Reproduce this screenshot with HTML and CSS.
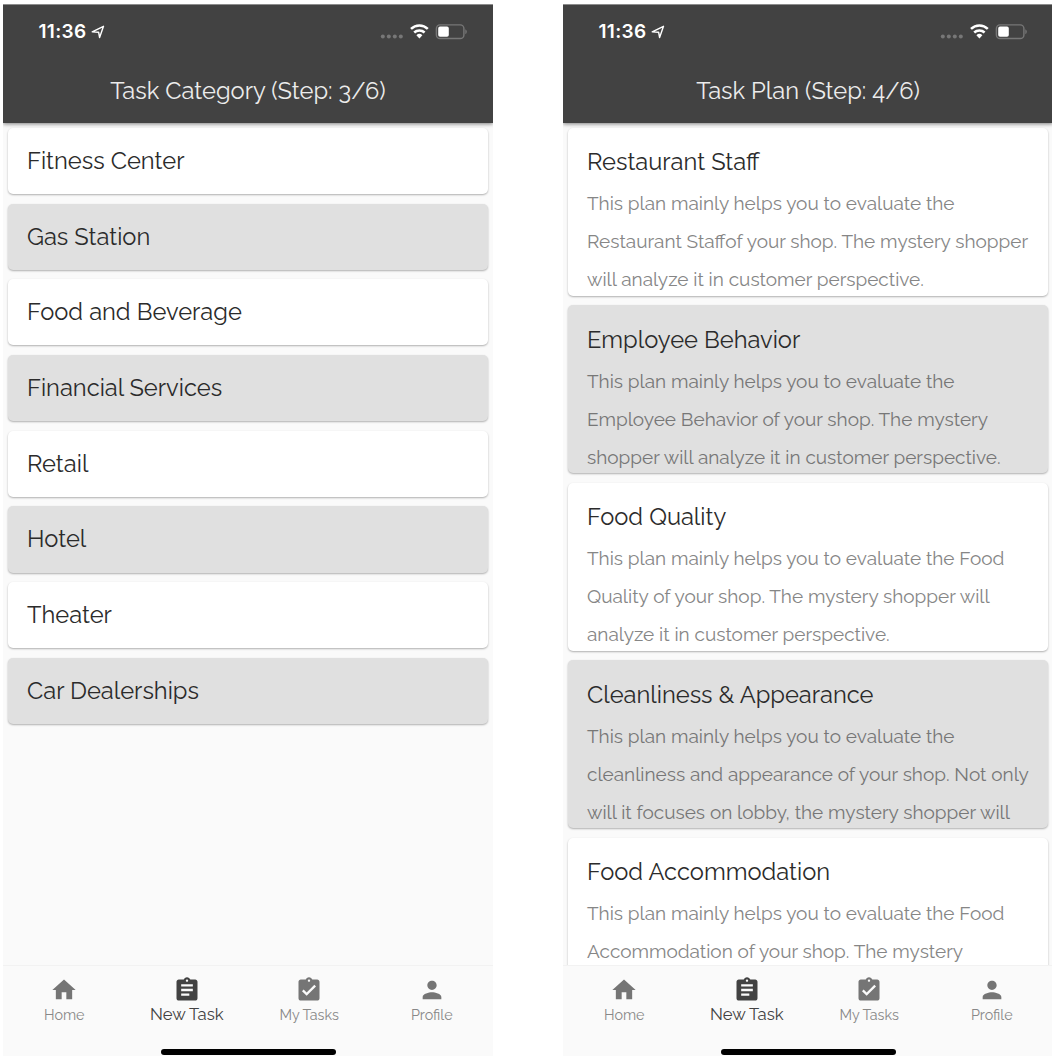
FILE: index.html
```html
<!DOCTYPE html>
<html lang="en">
<head>
<meta charset="utf-8">
<title>New Task</title>
<link rel="stylesheet" href="styles.css">
</head>
<body>
<svg class="defs" aria-hidden="true">
  <symbol id="home" viewBox="0 0 24 24"><path d="M10 20v-6h4v6h5v-8h3L12 3 2 12h3v8z"/></symbol>
  <symbol id="task" viewBox="0 0 24 24"><path d="M19 3h-4.18C14.4 1.84 13.3 1 12 1c-1.3 0-2.4.84-2.82 2H5c-1.1 0-2 .9-2 2v14c0 1.1.9 2 2 2h14c1.1 0 2-.9 2-2V5c0-1.1-.9-2-2-2zm-7 0c.55 0 1 .45 1 1s-.45 1-1 1-1-.45-1-1 .45-1 1-1zm2 14H7v-2h7v2zm3-4H7v-2h10v2zm0-4H7V7h10v2z"/></symbol>
  <symbol id="done" viewBox="0 0 24 24"><path d="M19 3h-4.18C14.4 1.84 13.3 1 12 1c-1.3 0-2.4.84-2.82 2H5c-1.1 0-2 .9-2 2v14c0 1.1.9 2 2 2h14c1.1 0 2-.9 2-2V5c0-1.1-.9-2-2-2zm-7 0c.55 0 1 .45 1 1s-.45 1-1 1-1-.45-1-1 .45-1 1-1zm-2 14l-4-4 1.41-1.41L10 14.17l6.59-6.59L18 9l-8 8z"/></symbol>
  <symbol id="person" viewBox="0 0 24 24"><path d="M12 12c2.210 0 4-1.790 4-4s-1.790-4-4-4-4 1.790-4 4 1.790 4 4 4zm0 2c-2.670 0-8 1.340-8 4v2h16v-2c0-2.660-5.330-4-8-4z"/></symbol>
  <symbol id="arrow" viewBox="0 0 14 14"><path d="M1.200 6.900 12.500 1.300 8.600 12.500 7.600 7.200z" fill="none" stroke="#fff" stroke-width="1.400" stroke-linejoin="round"/></symbol>
  <symbol id="signal" viewBox="0 0 90 18">
    <g fill="#777"><circle cx="3.800" cy="13.600" r="2"/><circle cx="9.800" cy="13.600" r="2"/><circle cx="15.800" cy="13.600" r="2"/><circle cx="21.800" cy="13.600" r="2"/></g>
    <g fill="none" stroke="#fff" stroke-width="2.500"><path d="M32 5.900a12 12 0 0 1 16.800 0M35.200 9.500a7.500 7.500 0 0 1 10.400 0"/></g>
    <path d="M37.400 12.200a4.500 4.500 0 0 1 6 0l-3 3.200z" fill="#fff"/>
    <rect x="57.400" y="1.900" width="27.500" height="13.600" rx="3.600" fill="none" stroke="#777" stroke-width="1.400"/>
    <rect x="59.200" y="3.600" width="10.600" height="10.200" rx="1.800" fill="#fff"/>
    <path d="M86.300 6.200v5q1.500-.8 1.500-2.500t-1.500-2.500z" fill="#777"/>
  </symbol>
</svg>

<main class="board">
  <section class="phone">
    <header class="top">
      <div class="status"><span class="clock">11:36</span><svg class="arrow"><use href="#arrow"/></svg><svg class="signal"><use href="#signal"/></svg></div>
      <h1 class="heading">Task Category (Step: 3/6)</h1>
    </header>
    <div class="list">
      <div class="card category">Fitness Center</div>
      <div class="card category shaded">Gas Station</div>
      <div class="card category">Food and Beverage</div>
      <div class="card category shaded">Financial Services</div>
      <div class="card category">Retail</div>
      <div class="card category shaded">Hotel</div>
      <div class="card category">Theater</div>
      <div class="card category shaded">Car Dealerships</div>
    </div>
    <nav class="tabs">
      <div class="tab"><svg class="icon"><use href="#home"/></svg><span>Home</span></div>
      <div class="tab active"><svg class="icon"><use href="#task"/></svg><span>New Task</span></div>
      <div class="tab"><svg class="icon"><use href="#done"/></svg><span>My Tasks</span></div>
      <div class="tab"><svg class="icon"><use href="#person"/></svg><span>Profile</span></div>
      <div class="indicator"></div>
    </nav>
  </section>

  <section class="phone">
    <header class="top">
      <div class="status"><span class="clock">11:36</span><svg class="arrow"><use href="#arrow"/></svg><svg class="signal"><use href="#signal"/></svg></div>
      <h1 class="heading">Task Plan (Step: 4/6)</h1>
    </header>
    <div class="list">
      <article class="card plan"><h2>Restaurant Staff</h2><p>This plan mainly helps you to evaluate the<br>Restaurant Staffof your shop. The mystery shopper<br>will analyze it in customer perspective.</p></article>
      <article class="card plan shaded"><h2>Employee Behavior</h2><p>This plan mainly helps you to evaluate the<br>Employee Behavior of your shop. The mystery<br>shopper will analyze it in customer perspective.</p></article>
      <article class="card plan"><h2>Food Quality</h2><p>This plan mainly helps you to evaluate the Food<br>Quality of your shop. The mystery shopper will<br>analyze it in customer perspective.</p></article>
      <article class="card plan shaded"><h2>Cleanliness &amp; Appearance</h2><p>This plan mainly helps you to evaluate the<br>cleanliness and appearance of your shop. Not only<br>will it focuses on lobby, the mystery shopper will</p></article>
      <article class="card plan"><h2>Food Accommodation</h2><p>This plan mainly helps you to evaluate the Food<br>Accommodation of your shop. The mystery</p></article>
    </div>
    <nav class="tabs">
      <div class="tab"><svg class="icon"><use href="#home"/></svg><span>Home</span></div>
      <div class="tab active"><svg class="icon"><use href="#task"/></svg><span>New Task</span></div>
      <div class="tab"><svg class="icon"><use href="#done"/></svg><span>My Tasks</span></div>
      <div class="tab"><svg class="icon"><use href="#person"/></svg><span>Profile</span></div>
      <div class="indicator"></div>
    </nav>
  </section>
</main>
</body>
</html>
```
FILE: styles.css
```css
* { box-sizing: border-box; }
body { margin: 0; background: #fff; font-family: Raleway, Lato, sans-serif; }
.defs { display: none; }
.board { display: flex; gap: 70px; width: 1052px; height: 1056px; padding: 4px 0 0 3px; overflow: hidden; }
.phone { flex: 0 0 490px; height: 1052px; display: flex; flex-direction: column; background: #fafafa; overflow: hidden; }
.top { position: relative; z-index: 1; flex: 0 0 119px; background: #424242; color: #fff; border-top: 1px solid #8c8c8c; box-shadow: 0 1px 4px rgba(0,0,0,.5); }
.status { display: flex; height: 54px; padding: 0 24.500px 0 35.500px; align-items: center; }
.clock { font: 600 19px/24px Inter, sans-serif; letter-spacing: .3px; width: 52px; }
.arrow { width: 14px; height: 14px; }
.signal { width: 90px; height: 18px; margin-left: auto; }
.heading { margin: 17px 0 0; font-size: 23.700px; line-height: 30px; font-weight: 400; text-align: center; color: #ececec; }
.list { flex: 1 1 0; min-height: 0; overflow: hidden; padding: 4.900px 4.600px 0 5px; display: flex; flex-direction: column; gap: 9.500px; }
.card { flex: none; border-radius: 5px; background: #fff; box-shadow: 0 1px 2px rgba(0,0,0,.3); color: #2b2b2b; padding: 0 19px; }
.shaded { background: #e0e0e0; }
.category { height: 66.200px; font-size: 23.700px; line-height: 67px; font-weight: 400; }
.plan { height: 168px; overflow: hidden; }
.plan h2 { margin: 19.500px 0 8px; font-size: 23.700px; line-height: 30px; font-weight: 400; }
.plan p { margin: 0; font-size: 19px; line-height: 37.900px; color: #868686; white-space: nowrap; }
.plan.shaded p { color: #777; }
.tabs { position: relative; flex: 0 0 91px; display: flex; border-top: 1px solid #f2f2f2; background: #fafafa; color: #888; }
.tab { flex: 1; display: flex; flex-direction: column; align-items: center; padding-top: 10px; font-size: 14.300px; line-height: 20px; }
.tab span { margin-top: 1px; }
.icon { width: 28px; height: 28px; fill: #757575; }
.active { color: #424242; font-size: 16.700px; }
.active .icon { fill: #424242; }
.active span { margin-top: 0; }
.indicator { position: absolute; left: 158px; top: 83px; width: 175px; height: 6px; border-radius: 3px; background: #000; }
```
